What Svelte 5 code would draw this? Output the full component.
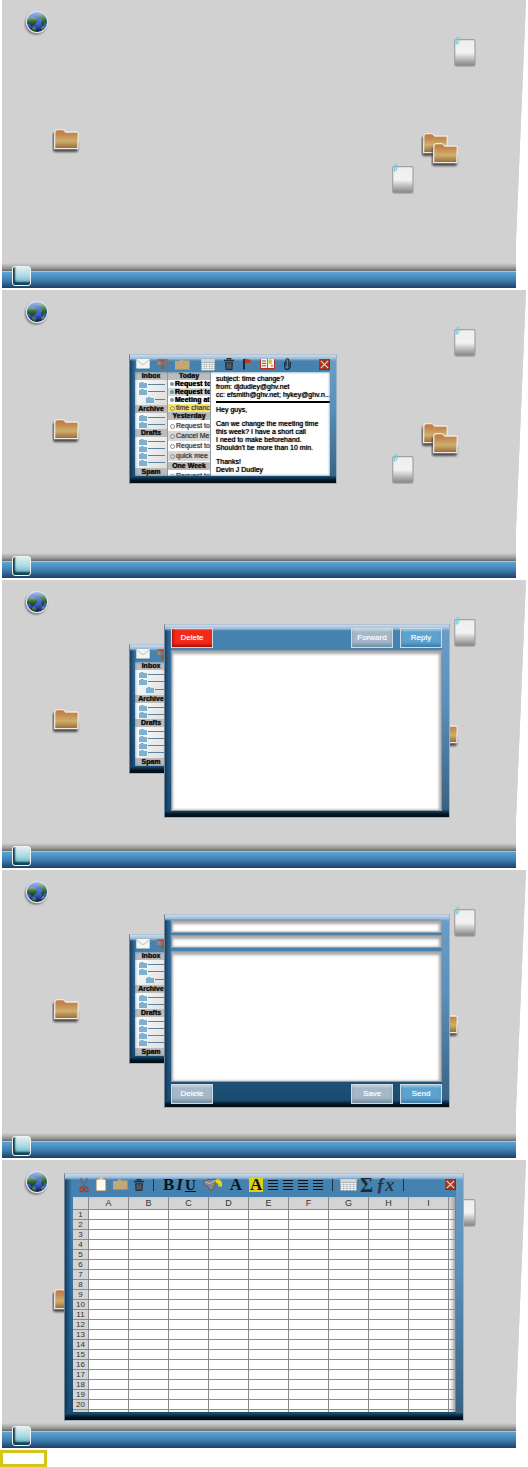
<script>
  const scenes = ['desktop', 'mail', 'read', 'compose', 'sheet'];

  const mailboxes = [
    { name: 'Inbox', folders: [false, false, true] },
    { name: 'Archive', folders: [false, false] },
    { name: 'Drafts', folders: [false, false, false, false] },
    { name: 'Spam', folders: [] }
  ];

  const groups = [
    {
      name: 'Today',
      items: [
        { text: 'Request to', unread: true },
        { text: 'Request to', unread: true, alt: true },
        { text: 'Meeting at', unread: true },
        { text: 'time chanc', active: true }
      ]
    },
    {
      name: 'Yesterday',
      items: [
        { text: 'Request to' },
        { text: 'Cancel Me', alt: true },
        { text: 'Request to' },
        { text: 'quick mee', alt: true }
      ]
    },
    { name: 'One Week', items: [{ text: 'Request to' }] }
  ];

  const letters = 'ABCDEFGHI'.split('');
  const rows = Array.from({ length: 20 }, (_, i) => i + 1);
</script>

<svg class="defs" width="0" height="0" aria-hidden="true">
  <defs>
    <linearGradient id="folderFill" x1="0" y1="0" x2="0" y2="1">
      <stop offset="0" stop-color="#c07848" />
      <stop offset="0.25" stop-color="#c4894f" />
      <stop offset="0.6" stop-color="#cdb06c" />
      <stop offset="1" stop-color="#96683a" />
    </linearGradient>
    <linearGradient id="paperFill" x1="0" y1="0" x2="0" y2="1">
      <stop offset="0" stop-color="#eeeeee" />
      <stop offset="0.5" stop-color="#f2f2f2" />
      <stop offset="0.85" stop-color="#a2a2a2" />
      <stop offset="1" stop-color="#828282" />
    </linearGradient>
    <linearGradient id="seaFill" x1="0" y1="0" x2="0" y2="1">
      <stop offset="0" stop-color="#a9bdf2" />
      <stop offset="0.35" stop-color="#5878dc" />
      <stop offset="0.65" stop-color="#3a5cc0" />
      <stop offset="1" stop-color="#0b1440" />
    </linearGradient>
    <linearGradient id="landFill" x1="0" y1="0" x2="0" y2="1">
      <stop offset="0" stop-color="#9cc0a4" />
      <stop offset="0.5" stop-color="#35703a" />
      <stop offset="1" stop-color="#123a1c" />
    </linearGradient>
    <clipPath id="globeClip"><circle cx="13" cy="12" r="10" /></clipPath>
    <filter id="soft" x="-20%" y="-20%" width="140%" height="150%">
      <feGaussianBlur stdDeviation="0.8" />
    </filter>
  </defs>
</svg>

{#snippet globe()}
  <svg class="item globe" width="26" height="26" viewBox="0 0 26 26">
    <circle cx="12" cy="13.6" r="10.8" fill="#666" filter="url(#soft)" />
    <circle cx="13" cy="12" r="11.2" fill="#dde1e8" />
    <circle cx="13" cy="12" r="10" fill="url(#seaFill)" />
    <g clip-path="url(#globeClip)" fill="url(#landFill)">
      <path d="M2 11 4 8 8 6.5 12 8 13.4 11 11 14.6 8 16 5 14 2 14Z" />
      <path d="M14 4.6 20 4 24 8 24 14 20.4 13 18.4 16.4 17 13 18.6 9.4 14.6 7.6Z" />
      <path d="M8 18 11 17 12.6 19.4 11 22 8 21ZM17 18 20 16 21 19.4 17.6 21Z" />
    </g>
  </svg>
{/snippet}

{#snippet folder(place)}
  <svg class="item {place}" width="28" height="26" viewBox="0 0 28 26">
    <path d="M1 5V22Q1 24 3 24H24Q26 24 26 22V14H8V5Z" fill="#4b4b4b" filter="url(#soft)" />
    <path
      d="M2.8 4.5Q2.8 1.7 5.5 1.7H10.5Q12.3 1.7 13.6 4H25Q26.4 4 26.3 5.5L25.8 20.7H2.6Z"
      fill="url(#folderFill)"
      stroke="#efe9e2"
      stroke-width="1.3"
    />
  </svg>
{/snippet}

{#snippet paper(place)}
  <svg class="item {place}" width="24" height="33" viewBox="0 0 24 33">
    <rect x="1.7" y="3.7" width="20.3" height="26.4" rx="1.6" fill="url(#paperFill)" stroke="#a2a2a2" stroke-width="1.2" />
    <path d="M3.2 8.5V4.2Q3.6 1.2 5.4 1.2 7 1.6 6.4 4.4L5.2 7.4Q4 8.8 3.4 7.4L4.4 3.6" fill="none" stroke="#6ccbdc" />
  </svg>
{/snippet}

{#snippet tan()}
  <svg width="15" height="11" viewBox="0 0 15 11">
    <path d="M0 2V10.5H14.6V1.4H8.6L7.7 0.3H5.3L4.4 2Z" fill="#c2a873" />
    <path d="M0.5 10.6H14.6V1.8" fill="none" stroke="#9c8e70" stroke-width="0.6" />
  </svg>
{/snippet}

{#snippet trash()}
  <svg width="10" height="12" viewBox="0 0 10 12">
    <path d="M3.3 1.6V0.5H6.7V1.6M0 2.5H10" fill="none" stroke="#252b30" stroke-width="1.3" />
    <path d="M1 4.2H9L8.4 12H1.6Z" fill="#252b30" />
    <path d="M3.2 5.2V10.8M5 5.2V10.8M6.8 5.2V10.8" stroke="#7d8f9e" stroke-width="0.8" />
  </svg>
{/snippet}

{#snippet table(w)}
  <svg width={w} height="13" viewBox="0 0 15 13" preserveAspectRatio="none">
    <path d="M0 1H15V12.4H0Z" fill="#9aa4aa" />
    <path d="M0.3 1H14.7V4H0.3Z" fill="#d6d6d2" />
    <path d="M0.8 5.5H14.2M0.8 7.5H14.2M0.8 9.5H14.2M0.8 11.5H14.2" stroke="#fafafa" stroke-width="1.3" stroke-dasharray="2.3 0.5" />
  </svg>
{/snippet}

{#snippet close()}
  <button class="close" aria-label="Close">
    <svg width="11" height="11" viewBox="0 0 11 11">
      <rect width="11" height="11" fill="#a9361a" />
      <path d="M1.8 1.8 9.2 9.2M9.2 1.8 1.8 9.2" stroke="#f5dcd2" stroke-width="1.1" />
      <path d="M0 10.5H10.5V0" fill="none" stroke="#6e2c22" stroke-width="0.8" />
    </svg>
  </button>
{/snippet}

{#snippet mail()}
  <section class="window mail">
    <header class="tools">
      <div class="set">
        <button aria-label="New message">
          <svg width="14" height="12" viewBox="0 0 14 12">
            <rect x="0.3" y="1" width="13.4" height="9.8" rx="1" fill="#f4f4f1" />
            <path d="M0.8 2 6 6.2Q7 7 8 6.2L13.2 2" fill="none" stroke="#b9b3ab" stroke-width="0.8" />
            <path d="M0.6 11.2H13.4" stroke="#4b6a80" stroke-width="0.8" />
          </svg>
        </button>
        <button aria-label="Mailbox">
          <svg width="13" height="12" viewBox="0 0 13 12">
            <path d="M0.3 7.3V3.4Q0.3 1 2.8 1H10.4Q12.8 1 12.8 3.4V7.3Z" fill="#75777a" />
            <path d="M1.2 7V4Q1.4 2.4 3 2.4T4.6 4V7Z" fill="#8f8a87" />
            <path d="M3 1.8H7.6V4.2H5.8V3H3Z" fill="#c9423a" />
            <path d="M5 7H8.4V11.3H5Z" fill="#976119" />
          </svg>
        </button>
        <button aria-label="Folder">{@render tan()}</button>
      </div>
      <div class="set wide">
        <button aria-label="Calendar">{@render table(14)}</button>
        <button aria-label="Delete">{@render trash()}</button>
        <button aria-label="Flag">
          <svg width="8" height="12" viewBox="0 0 8 12">
            <path d="M1 1V11.5" stroke="#1c1c1c" stroke-width="1.8" />
            <path d="M1.8 0.6 7.8 2V4.4L1.8 5.4Z" fill="#c5371e" />
          </svg>
        </button>
        <button aria-label="Address book">
          <svg width="15" height="12" viewBox="0 0 15 12">
            <path d="M0 1.2H15V11.4H0Z" fill="#b3331c" />
            <path d="M1 1H7.1V10H1ZM7.9 1H14V10H7.9Z" fill="#f8f3e6" />
            <path d="M2 3H6M2 5.4H6M2 7.8H6M11 7.8H13" stroke="#8a3d2c" stroke-width="0.9" />
            <path d="M8.8 1.6H11.6V6.6L10.2 5.6 8.8 6.6Z" fill="#e0b91e" />
          </svg>
        </button>
        <button aria-label="Attach">
          <svg width="7" height="12" viewBox="0 0 7 12">
            <path d="M2 8V2.6Q2 0.8 3.4 0.8T4.8 2.6V9.4" fill="none" stroke="#16242e" stroke-width="1.1" />
            <path d="M0.7 4V9Q0.8 11.4 3.2 11.4 6.3 11 6.3 8.6V4" fill="none" stroke="#16242e" stroke-width="1.1" />
          </svg>
        </button>
      </div>
      {@render close()}
    </header>
    <div class="columns">
      <nav class="boxes">
        {#each mailboxes as box}
          <h3>{box.name}</h3>
          {#if box.folders.length}
            <ul>
              {#each box.folders as nested}
                <li class:nested>
                  <svg width="8" height="6" viewBox="0 0 8 6"><path d="M0 1H1L2 0H4L5 1H8V6H0Z" fill="#7eb0cf" /></svg>
                  <i></i>
                </li>
              {/each}
            </ul>
          {/if}
        {/each}
      </nav>
      <div class="list">
        {#each groups as group}
          <h3>{group.name}</h3>
          <ul class:recent={group.name === 'Today'}>
            {#each group.items as item}
              <li class:unread={item.unread} class:alt={item.alt} class:active={item.active}>
                <i></i><span>{item.text}</span>
              </li>
            {/each}
          </ul>
        {/each}
      </div>
      <article>
        <div class="head">
          subject: time change?<br />from: djdudley@ghv.net<br />cc: efsmith@ghv.net; hykey@ghv.n...
        </div>
        <p>Hey guys,</p>
        <p>Can we change the meeting time<br />this week? I have a short call<br />I need to make beforehand.<br />Shouldn't be more than 10 min.</p>
        <p>Thanks!<br />Devin J Dudley</p>
      </article>
    </div>
  </section>
{/snippet}

<main>
  {#each scenes as scene}
    <section class="scene">
      <div class="canvas">
        {@render globe()}
        {@render folder('left')}
        {@render folder('back')}
        {@render folder('front')}
        {@render paper('upper')}
        {@render paper('lower')}

        {#if scene === 'mail' || scene === 'read' || scene === 'compose'}
          {@render mail()}
        {/if}

        {#if scene === 'read'}
          <section class="window letter read">
            <div class="actions">
              <button class="act red">Delete</button>
              <button class="act grey push">Forward</button>
              <button class="act blue">Reply</button>
            </div>
            <textarea class="field grow" readonly aria-label="Message"></textarea>
          </section>
        {/if}

        {#if scene === 'compose'}
          <section class="window letter compose">
            <input class="field" type="text" aria-label="To" />
            <input class="field" type="text" aria-label="Subject" />
            <textarea class="field grow" aria-label="Message"></textarea>
            <div class="actions">
              <button class="act grey">Delete</button>
              <button class="act grey push">Save</button>
              <button class="act blue">Send</button>
            </div>
          </section>
        {/if}

        {#if scene === 'sheet'}
          <section class="window sheet">
            <header class="tools">
              <div class="set">
                <button aria-label="Cut">
                  <svg width="10" height="16" viewBox="0 0 10 16">
                    <path d="M2 1 3 5 6.5 10M8 1 7 5 3.5 10" fill="none" stroke="#5d6a74" stroke-width="1.6" />
                    <ellipse cx="2.6" cy="12.4" rx="1.7" ry="2.3" fill="none" stroke="#a8392c" stroke-width="1.4" />
                    <ellipse cx="7.4" cy="12.4" rx="1.7" ry="2.3" fill="none" stroke="#a8392c" stroke-width="1.4" />
                  </svg>
                </button>
                <button aria-label="Paste">
                  <svg width="12" height="15" viewBox="0 0 12 15">
                    <rect x="0.5" y="1.5" width="11" height="13" fill="#9a7444" />
                    <rect x="1.5" y="2.5" width="9" height="11" fill="#fbfbf8" />
                    <path d="M3.5 2.8V1.2H5L5.3 0.3H6.7L7 1.2H8.5V2.8Z" fill="#d9cdb6" />
                  </svg>
                </button>
                <button aria-label="Open">{@render tan()}</button>
                <button aria-label="Delete">{@render trash()}</button>
              </div>
              <span class="bar"></span>
              <div class="set tight">
                <button class="glyph">B</button>
                <button class="glyph slant">I</button>
                <button class="glyph under">U</button>
              </div>
              <div class="set colour">
                <button aria-label="Fill">
                  <svg width="20" height="13" viewBox="0 0 20 13">
                    <path d="M0.5 3.5 5 1.4 8 1.8 12 0.8 13 5 11.5 8 9.5 12.4 7 12.2 5 8.6 1.6 7Z" fill="#85888a" stroke="#4c565e" stroke-width="0.8" />
                    <path d="M2 4 7 5.6 11.5 2.4" fill="none" stroke="#c2c5c6" stroke-width="0.9" />
                    <path d="M12 2.2Q15 0.2 17.6 2.4 19.4 4 19 8.4H15.4Q15.8 4.8 13 5Z" fill="#ecd50e" />
                  </svg>
                </button>
                <button class="glyph">A</button>
                <button class="glyph mark">A</button>
              </div>
              <div class="set aligns">
                {#each ['left', 'centre', 'right', 'full'] as side}
                  <button aria-label={`Align ${side}`}>
                    <svg width="10" height="12" viewBox="0 0 10 12">
                      <path d="M0 1.5H10M0 4.5H10M0 7.5H10M0 10.5H10" stroke="#0c1217" />
                    </svg>
                  </button>
                {/each}
              </div>
              <span class="bar"></span>
              <div class="set maths">
                <button aria-label="Table">{@render table(17)}</button>
                <button class="glyph sum">Σ</button>
                <button class="glyph fx">ƒx</button>
              </div>
              <span class="bar"></span>
              {@render close()}
            </header>
            <div class="cells">
              <table>
                <colgroup>
                  <col class="num" />
                  {#each letters as letter}<col class="std" />{/each}
                  <col />
                </colgroup>
                <thead>
                  <tr>
                    <th></th>
                    {#each letters as letter}<th scope="col">{letter}</th>{/each}
                    <th></th>
                  </tr>
                </thead>
                <tbody>
                  {#each rows as n}
                    <tr>
                      <th scope="row">{n}</th>
                      {#each letters as letter}<td></td>{/each}
                      <td></td>
                    </tr>
                  {/each}
                  <tr><th></th>{#each letters as letter}<td></td>{/each}<td></td></tr>
                </tbody>
              </table>
            </div>
          </section>
        {/if}
      </div>
      <footer class="taskbar"><button class="start" aria-label="Start"></button></footer>
    </section>
  {/each}
  <div class="tag"></div>
</main>

<style>
  :global(body) {
    background: #fff;
    font-family: 'Liberation Sans', Arial, sans-serif;
  }
  * {
    box-sizing: border-box;
  }
  .defs {
    position: absolute;
  }
  main {
    display: flex;
    flex-direction: column;
    gap: 2px;
  }
  button {
    display: block;
    margin: 0;
    padding: 0;
    border: 0;
    background: none;
    font-family: inherit;
  }
  svg {
    display: block;
  }
  h3,
  p,
  ul {
    margin: 0;
    padding: 0;
    list-style: none;
  }

  .scene {
    display: flex;
    flex-direction: column;
    min-height: 288px;
    margin: 0 2px;
    background: #d1d1d1;
    clip-path: polygon(0 0, 100% 0, calc(100% - 10px) 240px, calc(100% - 10px) 100%, 0 100%);
  }
  .canvas {
    position: relative;
    flex: 1;
    background: linear-gradient(to top, #686868, #9a9a9a 3px, #d1d1d1 8px);
  }
  .taskbar {
    position: relative;
    height: 17px;
    border-top: 1px solid #c0c0be;
    background: linear-gradient(#5ba4d6, #3f7fb0 50%, #1d3f68);
  }
  .start {
    position: absolute;
    left: 10px;
    top: -6px;
    width: 19px;
    height: 20px;
    border: 1px solid #f0f4f4;
    border-radius: 3px;
    background: linear-gradient(#e2f0f0, #a9dae3 50%, #56a9c4);
    box-shadow:
      inset 2px -3px 2px #12434f,
      inset 1px -1px 0 #0c2b34;
  }

  .item {
    position: absolute;
  }
  .globe {
    left: 22px;
    top: 10px;
  }
  .left {
    left: 50px;
    top: 128px;
  }
  .back {
    left: 419px;
    top: 132px;
  }
  .front {
    left: 429px;
    top: 142px;
  }
  .upper {
    left: 451px;
    top: 36px;
  }
  .lower {
    left: 389px;
    top: 163px;
  }

  .window {
    position: absolute;
    display: flex;
    flex-direction: column;
    border: 1px solid;
    border-color: #b4c2d6 #9fb0c6 #a0aebe #6e8297;
    background:
      linear-gradient(#1a5078, #04141f 60%, #020d16) left bottom / 100% 7px no-repeat,
      linear-gradient(#cbdcec, #9cbcd8 60%, #4784b200) left top / 100% 6px no-repeat,
      linear-gradient(to right, #0d2f4bcc, #1d517b99 4px, #1d517b00 7px) left bottom / 8px 98% no-repeat,
      linear-gradient(#6b9ec6, #5a90bb 40%, #375f7e) right top / 7px 100% no-repeat,
      linear-gradient(#4582b0 20%, #17486c);
  }
  .tools {
    display: flex;
    align-items: center;
  }
  .set {
    display: flex;
    align-items: center;
    gap: 6px;
  }
  .close {
    margin-left: auto;
  }

  .mail {
    left: 127px;
    top: 64px;
    width: 208px;
    height: 130px;
    padding: 3px 6px 7px 5px;
  }
  .mail .tools {
    height: 14px;
    gap: 11px;
    padding: 0 0 2px 1px;
  }
  .mail .wide {
    gap: 9px;
  }
  .columns {
    position: relative;
    display: grid;
    grid-template-columns: 32px 44px 1fr;
    flex: 1;
    min-height: 0;
    overflow: hidden;
    background: #fff;
    font-size: 7px;
    color: #111;
    text-shadow: 0 0 1px currentColor;
  }
  .columns::after {
    content: '';
    position: absolute;
    inset: 0;
    box-shadow: inset 0 0 3px #3f7faf;
  }
  h3 {
    flex: none;
    height: 8px;
    background: #bcbcbc;
    font-size: 7px;
    line-height: 8px;
    text-align: center;
  }
  .boxes,
  .list {
    display: flex;
    flex-direction: column;
    min-height: 0;
    overflow: hidden;
  }
  .boxes ul {
    padding: 1px 2px 1px 4px;
    background: linear-gradient(120deg, #fff, #dcdcdc);
  }
  .boxes ul:last-of-type {
    flex: 1;
  }
  .boxes li {
    display: flex;
    align-items: center;
    gap: 1px;
    height: 7px;
  }
  .boxes .nested {
    height: 9px;
    padding-left: 7px;
  }
  .boxes i {
    flex: 1;
    height: 1px;
    background: #5d8299;
  }
  .list {
    border-left: 1px solid #8d9aa3;
    border-right: 1px solid #8d9aa3;
  }
  .list ul {
    padding: 1px 0;
  }
  .list ul.recent {
    padding: 0;
  }
  .list li {
    display: flex;
    align-items: center;
    gap: 1px;
    height: 10px;
    padding-left: 2px;
    line-height: 10px;
    color: #444;
    white-space: nowrap;
  }
  .list .recent li {
    height: 8px;
    line-height: 8px;
  }
  .list .unread {
    color: #000;
    font-weight: bold;
  }
  .list .alt {
    background: #d9d9d9;
  }
  .list .active {
    background: #fbe36d;
  }
  .list i {
    flex: none;
    width: 5px;
    height: 5px;
    border: 1px solid #8b8b8b;
    border-radius: 50%;
  }
  .list .unread i {
    width: 4px;
    height: 4px;
    border: 0;
    background: #6f97b0;
  }
  article {
    display: flex;
    flex-direction: column;
    gap: 6px;
    padding: 3px 3px 0 5px;
    line-height: 8px;
    white-space: nowrap;
    color: #000;
  }
  .head {
    padding-bottom: 2px;
    border-bottom: 2px solid #000;
  }
  .head + p {
    margin-top: -3px;
  }

  .letter {
    left: 162px;
    top: 44px;
    width: 286px;
    height: 194px;
  }
  .read {
    gap: 2px;
    padding: 3px 7px 6px 6px;
  }
  .compose {
    gap: 2px;
    padding: 5px 7px 3px 6px;
  }
  .field {
    display: block;
    width: 100%;
    height: 13px;
    margin: 0;
    padding: 2px 4px;
    border: 1px solid #8e9aa5;
    border-radius: 0;
    background: #fff;
    box-shadow:
      inset 0 3px 3px #a9a9a9,
      inset -2px 0 3px #b5b5b5,
      inset 1px 0 2px #c9c9c9;
    font-family: inherit;
    font-size: 8px;
    outline: 0;
    resize: none;
  }
  .grow {
    flex: 1;
    min-height: 0;
  }
  .compose .grow {
    margin-top: 1px;
  }
  .actions {
    display: flex;
    gap: 7px;
  }
  .act {
    width: 42px;
    height: 20px;
    border: 1px solid #cfdbe4;
    font-size: 8px;
    line-height: 18px;
    color: #fff;
    text-shadow: 0 0 1px #ffffff88;
    box-shadow:
      inset 0 2px 2px #ffffff55,
      inset 0 -3px 3px #00203844;
  }
  .push {
    margin-left: auto;
  }
  .red {
    background: #f22a18;
    box-shadow:
      inset 1px -2px 3px #a80c04,
      inset 0 1px 1px #ff6a58;
  }
  .grey {
    background: #a4b8ca;
  }
  .blue {
    background: #5ca3d0;
  }

  .sheet {
    left: 62px;
    top: 13px;
    width: 400px;
    height: 248px;
    padding: 3px 7px 8px 8px;
  }
  .sheet .tools {
    height: 15px;
    gap: 9px;
    padding-left: 6px;
  }
  .bar {
    width: 1px;
    height: 12px;
    background: #1c3346;
  }
  .tight {
    gap: 2px;
  }
  .sheet .colour {
    gap: 7px;
    margin-left: -2px;
  }
  .sheet .aligns {
    gap: 5px;
    margin-left: -4px;
  }
  .sheet .maths {
    gap: 3px;
    margin-left: -2px;
  }
  .glyph {
    font-family: 'Liberation Serif', 'Times New Roman', serif;
    font-size: 17px;
    font-weight: bold;
    line-height: 14px;
    color: #0b141b;
  }
  .slant {
    font-style: italic;
  }
  .under {
    font-size: 15px;
    text-decoration: underline;
  }
  .mark {
    width: 14px;
    background: #e3d013;
  }
  .sum {
    font-size: 20px;
    color: #1f2a33;
  }
  .fx {
    font-size: 18px;
    font-style: italic;
    color: #24384a;
  }
  .cells {
    position: relative;
    flex: 1;
    min-height: 0;
    margin-top: 5px;
    overflow: hidden;
    background: #fff;
  }
  .cells::after {
    content: '';
    position: absolute;
    inset: 0;
    border-right: 1px solid #6d8799;
    box-shadow: inset -4px 0 4px -2px #999;
  }
  table {
    width: 100%;
    table-layout: fixed;
    border-collapse: separate;
    border-spacing: 0;
  }
  .num {
    width: 16px;
  }
  .std {
    width: 40px;
  }
  th,
  td {
    height: 10px;
    padding: 0;
    border-right: 1px solid #8b8b8b;
    border-bottom: 1px solid #8b8b8b;
  }
  th {
    background: #d4d4d4;
    font-size: 8px;
    font-weight: normal;
    line-height: 9px;
    color: #333;
  }
  thead th {
    height: 13px;
    font-size: 9px;
    line-height: 12px;
  }

  .tag {
    width: 47px;
    height: 17px;
    border: 3px solid #d5c51b;
  }
</style>
